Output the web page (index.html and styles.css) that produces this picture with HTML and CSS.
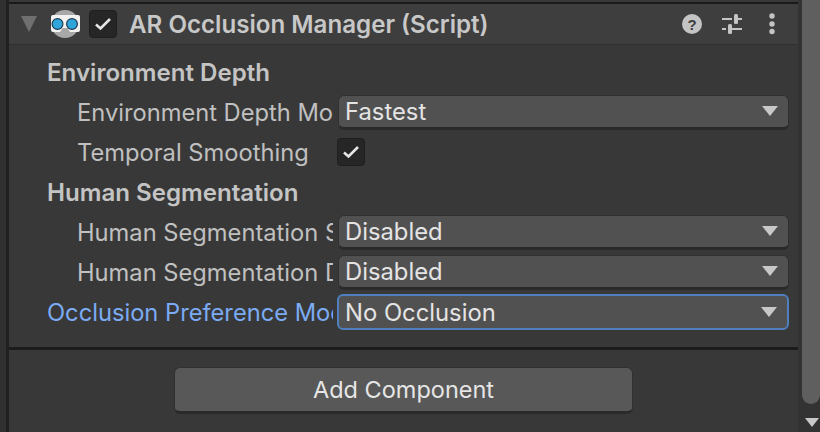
FILE: index.html
```html
<!DOCTYPE html>
<html lang="en">
<head>
<meta charset="utf-8">
<title>AR Occlusion Manager</title>
<link rel="stylesheet" href="styles.css">
</head>
<body>
<div class="window">
  <div class="gutter"></div>
  <main class="inspector">
    <header class="comp-header">
      <span class="foldout"></span>
      <svg class="goggles" width="32" height="28" viewBox="0 0 32 28">
        <circle cx="16" cy="14" r="14" fill="#a8a8a8"/>
        <rect x="2" y="5" width="29" height="17" rx="2" fill="#f2f2f2"/>
        <path d="M11 22 L13.5 18 H18.5 L21 22 Z" fill="#a8a8a8"/>
        <circle cx="8.5" cy="14" r="5.4" fill="#2fa5dc" stroke="#1c3a4c" stroke-width="1.2"/>
        <circle cx="23" cy="14" r="5.4" fill="#2fa5dc" stroke="#1c3a4c" stroke-width="1.2"/>
      </svg>
      <span class="checkbox"><svg width="18" height="14" viewBox="0 0 18 14"><path d="M2 7.5 L6.5 11.5 L16 2" fill="none" stroke="#e6e6e6" stroke-width="2.6"/></svg></span>
      <h1 class="comp-title">AR Occlusion Manager (Script)</h1>
      <div class="header-icons">
        <svg width="20" height="20" viewBox="0 0 20 20"><circle cx="10" cy="10" r="10" fill="#c4c4c4"/><text x="10" y="15.5" text-anchor="middle" class="help-mark">?</text></svg>
        <svg width="20" height="20" viewBox="0 0 20 20" fill="#c4c4c4"><rect x="0" y="4" width="10" height="2"/><rect x="12" y="0" width="4" height="10" rx="1.5"/><rect x="16" y="4" width="4" height="2"/><rect x="0" y="14" width="4" height="2"/><rect x="6" y="10" width="4" height="10" rx="1.5"/><rect x="10" y="14" width="10" height="2"/></svg>
        <svg class="dots" width="6" height="22" viewBox="0 0 6 22" fill="#c4c4c4"><circle cx="3" cy="3" r="2.7"/><circle cx="3" cy="11" r="2.7"/><circle cx="3" cy="18.5" r="2.7"/></svg>
      </div>
    </header>
    <section class="props">
      <div class="row"><span class="label label-group">Environment Depth</span></div>
      <div class="row"><span class="label label-sub">Environment Depth Mode</span><div class="dropdown"><span>Fastest</span><i class="arrow"></i></div></div>
      <div class="row"><span class="label label-sub">Temporal Smoothing</span><span class="checkbox checkbox-field"><svg width="18" height="14" viewBox="0 0 18 14"><path d="M2 7.5 L6.5 11.5 L16 2" fill="none" stroke="#e6e6e6" stroke-width="2.6"/></svg></span></div>
      <div class="row"><span class="label label-group">Human Segmentation</span></div>
      <div class="row"><span class="label label-sub">Human Segmentation Stencil Mode</span><div class="dropdown"><span>Disabled</span><i class="arrow"></i></div></div>
      <div class="row"><span class="label label-sub">Human Segmentation Depth Mode</span><div class="dropdown"><span>Disabled</span><i class="arrow"></i></div></div>
      <div class="row"><span class="label label-focus">Occlusion Preference Mode</span><div class="dropdown dropdown-focus"><span>No Occlusion</span><i class="arrow"></i></div></div>
    </section>
    <footer class="add-area"><button class="add-btn" type="button">Add Component</button></footer>
  </main>
  <aside class="scrollbar"><div class="thumb"></div><i class="arrow arrow-scroll"></i></aside>
</div>
</body>
</html>
```
FILE: styles.css
```css
* { box-sizing: border-box; }
html, body { margin: 0; height: 100%; }
body { background: #383838; font-family: Inter, "Liberation Sans", sans-serif; color: #d2d2d2; overflow: hidden; }
.window { display: flex; width: 820px; height: 432px; }
.gutter { width: 6px; background: #303030; flex: none; }
.inspector { width: 792px; flex: none; border-left: 3px solid #202020; padding-top: 2px; background: #383838; display: flex; flex-direction: column; }
.comp-header { height: 43px; background: #3e3e3e; border-top: 2px solid #1a1a1a; border-bottom: 1px solid #303030; display: flex; align-items: center; padding-left: 12px; flex: none; }
.foldout { width: 0; height: 0; border-left: 8px solid transparent; border-right: 8px solid transparent; border-top: 16px solid #6f6f6f; margin-right: 12px; flex: none; }
.goggles { flex: none; margin-right: 8px; }
.checkbox { width: 28px; height: 28px; background: #262626; border: 1px solid #1e1e1e; border-radius: 4px; display: flex; align-items: center; justify-content: center; flex: none; }
.comp-title { margin: 0 0 0 12px; font-size: 24.15px; font-weight: 600; color: #c8c8c8; white-space: nowrap; flex: 1; }
.header-icons { display: flex; align-items: center; gap: 20px; margin-right: 23px; flex: none; }
.dots { margin-left: 7px; }
.help-mark { font: 700 15px "Liberation Sans", sans-serif; fill: #3e3e3e; }
.props { padding: 7px 9px 0 38px; height: 305px; border-bottom: 3px solid #1c1c1c; flex: none; }
.row { height: 40px; display: flex; align-items: center; }
.label { font-size: 23.7px; white-space: nowrap; overflow: hidden; flex: none; }
.label-group { font-size: 24.1px; font-weight: 600; color: #c4c4c4; }
.label-sub { width: 256px; margin-left: 30px; margin-right: 5px; color: #c0c0c0; }
.label-focus { width: 286px; margin-right: 5px; color: #7babf2; }
.dropdown { width: 451px; height: 35px; background: #515151; border: 1px solid #303030; border-bottom: 3px solid #2a2a2a; border-radius: 6px; display: flex; align-items: center; justify-content: space-between; padding: 0 10px 0 6px; font-size: 23.8px; color: #e4e4e4; }
.dropdown-focus { width: 453px; height: 36px; margin-left: -1px; border: 2px solid #4f7fbf; padding-left: 6px; padding-right: 10px; }
.arrow { width: 0; height: 0; border-left: 8px solid transparent; border-right: 8px solid transparent; border-top: 10px solid #c8c8c8; flex: none; }
.checkbox-field { margin-left: -1px; }
.add-area { display: flex; padding: 17px 0 0 165px; }
.add-btn { width: 459px; height: 47px; background: #585858; border: 1px solid #303030; border-bottom: 3px solid #2a2a2a; border-radius: 6px; color: #e6e6e6; font: 23.5px Inter, "Liberation Sans", sans-serif; padding: 0; }
.scrollbar { width: 22px; flex: none; background: #333333; display: flex; flex-direction: column; align-items: flex-end; }
.thumb { width: 18px; height: 404px; background: #5f5f5f; border-radius: 0 0 9px 9px; flex: none; }
.arrow-scroll { margin-top: 14px; margin-right: 1px; border-left-width: 7px; border-right-width: 7px; border-top-width: 9px; }
```
